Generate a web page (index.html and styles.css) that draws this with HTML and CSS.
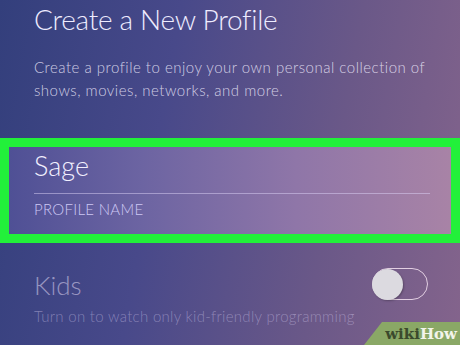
FILE: index.html
```html
<!DOCTYPE html>
<html lang="en">
<head>
    <meta charset="UTF-8">
    <meta name="viewport" content="width=device-width, initial-scale=1.0">
    <title>Create a New Profile</title>
    <link rel="stylesheet" href="styles.css">
</head>
<body>
    <div class="screen">
        <!-- header -->
        <div class="intro">
            <h1>Create a New Profile</h1>
            <p>Create a profile to enjoy your own personal collection of shows, movies, networks, and more.</p>
        </div>

        <!-- name field, highlighted -->
        <div class="highlight">
            <div class="field">
                <div class="field-value">Sage</div>
                <div class="field-label">PROFILE NAME</div>
            </div>
        </div>

        <!-- kids switch -->
        <div class="kids">
            <div class="kids-row">
                <span class="kids-title">Kids</span>
                <span class="switch"><span class="knob"></span></span>
            </div>
            <p class="kids-note">Turn on to watch only kid-friendly programming</p>
        </div>

        <div class="badge"><span class="wiki">wiki</span><span class="how">How</span></div>
    </div>
</body>
</html>
```

FILE: styles.css
```css
html, body {
    margin: 0;
    padding: 0;
}
body {
    font-family: Lato, "Open Sans", sans-serif;
    color: #fff;
}
.screen {
    position: relative;
    width: 460px;
    height: 345px;
    overflow: hidden;
    background: linear-gradient(100deg, #333f7c 0%, #48498a 35%, #6a5888 70%, #84648c 100%);
}
.intro {
    padding: 0 20px 0 34px;
}
h1 {
    margin: 0;
    padding-top: 1px;
    font-size: 28px;
    font-weight: 300;
    line-height: 36px;
    letter-spacing: -0.3px;
    color: #eeecff;
}
.intro p {
    width: 400px;
    margin: 19px 0 0;
    font-size: 15px;
    line-height: 23px;
    font-weight: 300;
    letter-spacing: 0.5px;
    color: rgba(238, 234, 252, 0.82);
}
.highlight {
    margin-top: 36px;
    border: 9px solid #22f03a;
    background: linear-gradient(90deg, #4f5095 0%, #6c64a2 30%, #8f76a8 65%, #a883a6 100%);
}
.field {
    padding: 2px 21px 16px 25px;
}
.field-value {
    font-size: 27px;
    font-weight: 300;
    line-height: 34px;
    padding-bottom: 10px;
    border-bottom: 1px solid rgba(220, 210, 245, 0.5);
    color: #f2f0ff;
}
.field-label {
    margin-top: 6px;
    font-size: 15px;
    line-height: 18px;
    font-weight: 300;
    letter-spacing: 0.3px;
    color: #cdc8f4;
}
.kids {
    padding: 24px 32px 0 34px;
}
.kids-row {
    display: flex;
    justify-content: space-between;
    align-items: center;
}
.kids-title {
    padding-top: 2px;
    font-size: 26px;
    font-weight: 300;
    color: rgba(225, 220, 245, 0.55);
}
.switch {
    display: flex;
    align-items: center;
    width: 56px;
    height: 32px;
    border: 1.5px solid #e2cfe2;
    border-radius: 17px;
    box-sizing: border-box;
}
.knob {
    width: 31px;
    height: 31px;
    margin-left: -1px;
    border-radius: 50%;
    background: #dcdae0;
    box-shadow: 1px 1px 2px rgba(0, 0, 0, 0.25);
}
.kids-note {
    margin: 6px 0 0;
    font-size: 15px;
    font-weight: 300;
    letter-spacing: 0.3px;
    color: rgba(210, 200, 235, 0.45);
}
.badge {
    position: absolute;
    right: 0;
    bottom: 0;
    width: 96px;
    height: 23px;
    background: #8aa866;
    clip-path: polygon(18px 0, 100% 0, 100% 100%, 0 100%);
    font-family: "DejaVu Serif", "Liberation Serif", serif;
    font-weight: bold;
    font-size: 15px;
    line-height: 25px;
    text-align: right;
    padding-right: 3px;
    box-sizing: border-box;
}
.wiki {
    color: #3b4a2c;
}
.how {
    color: #f2f4ea;
}
```
